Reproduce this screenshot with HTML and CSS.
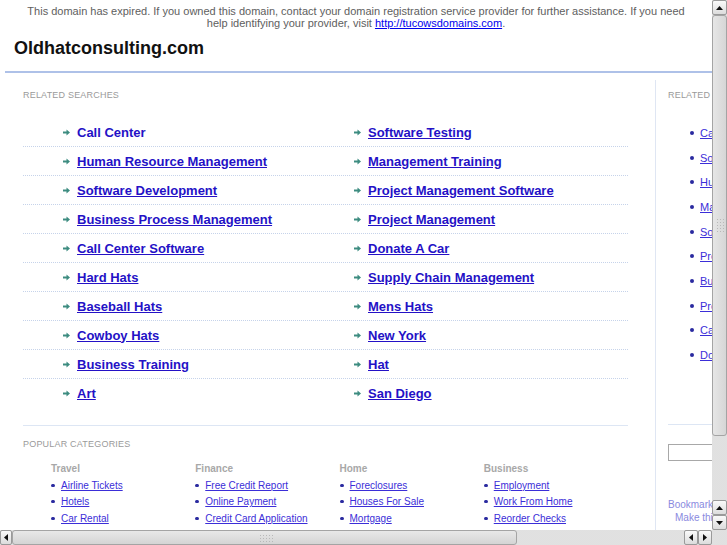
FILE: index.html
```html
<!DOCTYPE html>
<html>
<head>
<meta charset="utf-8">
<title>Oldhatconsulting.com</title>
<link rel="stylesheet" href="styles.css">
</head>
<body>
<div class="window">
  <div class="viewport">
    <div class="page">
      <div class="banner">This domain has expired. If you owned this domain, contact your domain registration service provider for further assistance. If you need help identifying your provider, visit <a href="#">http://tucowsdomains.com</a>.</div>
      <h1 class="title">Oldhatconsulting.com</h1>
      <div class="rule"></div>
      <div class="main">
        <div class="left">
          <div class="label">RELATED SEARCHES</div>
          <div class="rs">
            <div class="rs-row">
              <div class="rs-cell"><svg class="arr" width="7" height="7" viewBox="0 0 7 7"><path d="M0 2.5h3.5V0.5L7 3.5 3.5 6.5V4.5H0z"/></svg><a class="nul" href="#">Call Center</a></div>
              <div class="rs-cell"><svg class="arr" width="7" height="7" viewBox="0 0 7 7"><path d="M0 2.5h3.5V0.5L7 3.5 3.5 6.5V4.5H0z"/></svg><a href="#">Software Testing</a></div>
            </div>
            <div class="rs-row">
              <div class="rs-cell"><svg class="arr" width="7" height="7" viewBox="0 0 7 7"><path d="M0 2.5h3.5V0.5L7 3.5 3.5 6.5V4.5H0z"/></svg><a href="#">Human Resource Management</a></div>
              <div class="rs-cell"><svg class="arr" width="7" height="7" viewBox="0 0 7 7"><path d="M0 2.5h3.5V0.5L7 3.5 3.5 6.5V4.5H0z"/></svg><a href="#">Management Training</a></div>
            </div>
            <div class="rs-row">
              <div class="rs-cell"><svg class="arr" width="7" height="7" viewBox="0 0 7 7"><path d="M0 2.5h3.5V0.5L7 3.5 3.5 6.5V4.5H0z"/></svg><a href="#">Software Development</a></div>
              <div class="rs-cell"><svg class="arr" width="7" height="7" viewBox="0 0 7 7"><path d="M0 2.5h3.5V0.5L7 3.5 3.5 6.5V4.5H0z"/></svg><a href="#">Project Management Software</a></div>
            </div>
            <div class="rs-row">
              <div class="rs-cell"><svg class="arr" width="7" height="7" viewBox="0 0 7 7"><path d="M0 2.5h3.5V0.5L7 3.5 3.5 6.5V4.5H0z"/></svg><a href="#">Business Process Management</a></div>
              <div class="rs-cell"><svg class="arr" width="7" height="7" viewBox="0 0 7 7"><path d="M0 2.5h3.5V0.5L7 3.5 3.5 6.5V4.5H0z"/></svg><a href="#">Project Management</a></div>
            </div>
            <div class="rs-row">
              <div class="rs-cell"><svg class="arr" width="7" height="7" viewBox="0 0 7 7"><path d="M0 2.5h3.5V0.5L7 3.5 3.5 6.5V4.5H0z"/></svg><a href="#">Call Center Software</a></div>
              <div class="rs-cell"><svg class="arr" width="7" height="7" viewBox="0 0 7 7"><path d="M0 2.5h3.5V0.5L7 3.5 3.5 6.5V4.5H0z"/></svg><a href="#">Donate A Car</a></div>
            </div>
            <div class="rs-row">
              <div class="rs-cell"><svg class="arr" width="7" height="7" viewBox="0 0 7 7"><path d="M0 2.5h3.5V0.5L7 3.5 3.5 6.5V4.5H0z"/></svg><a href="#">Hard Hats</a></div>
              <div class="rs-cell"><svg class="arr" width="7" height="7" viewBox="0 0 7 7"><path d="M0 2.5h3.5V0.5L7 3.5 3.5 6.5V4.5H0z"/></svg><a href="#">Supply Chain Management</a></div>
            </div>
            <div class="rs-row">
              <div class="rs-cell"><svg class="arr" width="7" height="7" viewBox="0 0 7 7"><path d="M0 2.5h3.5V0.5L7 3.5 3.5 6.5V4.5H0z"/></svg><a href="#">Baseball Hats</a></div>
              <div class="rs-cell"><svg class="arr" width="7" height="7" viewBox="0 0 7 7"><path d="M0 2.5h3.5V0.5L7 3.5 3.5 6.5V4.5H0z"/></svg><a href="#">Mens Hats</a></div>
            </div>
            <div class="rs-row">
              <div class="rs-cell"><svg class="arr" width="7" height="7" viewBox="0 0 7 7"><path d="M0 2.5h3.5V0.5L7 3.5 3.5 6.5V4.5H0z"/></svg><a href="#">Cowboy Hats</a></div>
              <div class="rs-cell"><svg class="arr" width="7" height="7" viewBox="0 0 7 7"><path d="M0 2.5h3.5V0.5L7 3.5 3.5 6.5V4.5H0z"/></svg><a href="#">New York</a></div>
            </div>
            <div class="rs-row">
              <div class="rs-cell"><svg class="arr" width="7" height="7" viewBox="0 0 7 7"><path d="M0 2.5h3.5V0.5L7 3.5 3.5 6.5V4.5H0z"/></svg><a href="#">Business Training</a></div>
              <div class="rs-cell"><svg class="arr" width="7" height="7" viewBox="0 0 7 7"><path d="M0 2.5h3.5V0.5L7 3.5 3.5 6.5V4.5H0z"/></svg><a href="#">Hat</a></div>
            </div>
            <div class="rs-row">
              <div class="rs-cell"><svg class="arr" width="7" height="7" viewBox="0 0 7 7"><path d="M0 2.5h3.5V0.5L7 3.5 3.5 6.5V4.5H0z"/></svg><a href="#">Art</a></div>
              <div class="rs-cell"><svg class="arr" width="7" height="7" viewBox="0 0 7 7"><path d="M0 2.5h3.5V0.5L7 3.5 3.5 6.5V4.5H0z"/></svg><a href="#">San Diego</a></div>
            </div>
          </div>
          <div class="popular">
            <div class="label">POPULAR CATEGORIES</div>
            <div class="cats">
              <div class="cat">
                <div class="cat-h">Travel</div>
                <ul class="cat-list">
                  <li><a href="#">Airline Tickets</a></li>
                  <li><a href="#">Hotels</a></li>
                  <li><a href="#">Car Rental</a></li>
                </ul>
              </div>
              <div class="cat">
                <div class="cat-h">Finance</div>
                <ul class="cat-list">
                  <li><a href="#">Free Credit Report</a></li>
                  <li><a href="#">Online Payment</a></li>
                  <li><a href="#">Credit Card Application</a></li>
                </ul>
              </div>
              <div class="cat">
                <div class="cat-h">Home</div>
                <ul class="cat-list">
                  <li><a href="#">Foreclosures</a></li>
                  <li><a href="#">Houses For Sale</a></li>
                  <li><a href="#">Mortgage</a></li>
                </ul>
              </div>
              <div class="cat">
                <div class="cat-h">Business</div>
                <ul class="cat-list">
                  <li><a href="#">Employment</a></li>
                  <li><a href="#">Work From Home</a></li>
                  <li><a href="#">Reorder Checks</a></li>
                </ul>
              </div>
            </div>
          </div>
        </div>
        <div class="right">
          <div class="label">RELATED SEARCHES</div>
          <ul class="side-list">
            <li><a href="#">Call Center</a></li>
            <li><a href="#">Software Testing</a></li>
            <li><a href="#">Human Resource Management</a></li>
            <li><a href="#">Management Training</a></li>
            <li><a href="#">Software Development</a></li>
            <li><a href="#">Project Management Software</a></li>
            <li><a href="#">Business Process Management</a></li>
            <li><a href="#">Project Management</a></li>
            <li><a href="#">Call Center Software</a></li>
            <li><a href="#">Donate A Car</a></li>
          </ul>
          <div class="side-sep"></div>
          <div class="search"></div>
          <div class="bm">Bookmark this page</div>
          <div class="bm bm2">Make this your Homepage</div>
        </div>
      </div>
    </div>
  </div>
  <div class="vscroll">
    <div class="sbtn"><svg width="7" height="4" viewBox="0 0 7 4"><path d="M3.5 0L7 4H0z"/></svg></div>
    <div class="vthumb"><span class="grip vgrip"></span></div>
    <div class="track"></div>
    <div class="sbtn"><svg width="7" height="4" viewBox="0 0 7 4"><path d="M3.5 0L7 4H0z"/></svg></div>
    <div class="sbtn"><svg width="7" height="4" viewBox="0 0 7 4"><path d="M0 0H7L3.5 4z"/></svg></div>
  </div>
  <div class="hscroll">
    <div class="sbtn hbtn first"><svg width="4" height="7" viewBox="0 0 4 7"><path d="M0 3.5L4 0V7z"/></svg></div>
    <div class="hthumb"><span class="grip hgrip"></span></div>
    <div class="track"></div>
    <div class="sbtn hbtn"><svg width="4" height="7" viewBox="0 0 4 7"><path d="M0 3.5L4 0V7z"/></svg></div>
    <div class="sbtn hbtn"><svg width="4" height="7" viewBox="0 0 4 7"><path d="M4 3.5L0 0V7z"/></svg></div>
  </div>
  <div class="corner"></div>
</div>
</body>
</html>
```
FILE: styles.css
```css
html, body {
  margin: 0;
  padding: 0;
  background: #fff;
}
body {
  width: 727px;
  height: 545px;
  overflow: hidden;
  font-family: "Liberation Sans", Arial, sans-serif;
}
.window {
  display: grid;
  grid-template-columns: 712px 15px;
  grid-template-rows: 530px 15px;
  width: 727px;
  height: 545px;
  overflow: hidden;
}
.viewport {
  overflow: hidden;
  min-width: 0;
  min-height: 0;
}
.page {
  width: 960px;
}
.banner {
  width: 712px;
  box-sizing: border-box;
  padding: 5px 20px 0;
  font-size: 11px;
  line-height: 12px;
  color: #5e5e5e;
  text-align: center;
}
.banner a {
  color: #0000ee;
  text-decoration: underline;
}
.title {
  margin: 8px 0 0 14px;
  font-size: 18px;
  line-height: 22px;
  font-weight: bold;
  color: #111;
}
.rule {
  margin: 12px 0 0 5px;
  height: 2px;
  background: #aec1e8;
}
.main {
  display: flex;
  margin: 7px 0 0 5px;
}
.left {
  width: 650px;
  box-sizing: border-box;
  padding: 10px 27px 0 18px;
}
.label {
  font-size: 9px;
  line-height: 10px;
  color: #9a9a9a;
  letter-spacing: 0.2px;
}
.rs {
  margin-top: 18px;
}
.rs-row {
  display: flex;
  height: 28px;
  border-bottom: 1px dotted #c6d3ea;
}
.rs-row:last-child {
  border-bottom: none;
}
.rs-cell {
  width: 291px;
  box-sizing: border-box;
  padding-left: 40px;
  display: flex;
  align-items: center;
  gap: 7px;
}
.arr {
  fill: #3d8c80;
  flex: none;
}
.rs-cell a {
  font-size: 13px;
  font-weight: bold;
  color: #2411c6;
  text-decoration: underline;
}
.rs-cell a.nul {
  text-decoration: none;
}
.popular {
  margin-top: 18px;
  border-top: 1px solid #dde6f4;
  padding-top: 13px;
}
.cats {
  display: flex;
  margin-top: 13px;
  padding-left: 28px;
}
.cat {
  width: 145px;
}
.cat-h {
  font-size: 10px;
  line-height: 14px;
  font-weight: bold;
  color: #a8a8a8;
}
.cat-list {
  list-style: none;
  margin: 1px 0 0;
  padding: 0;
}
.cat-list li {
  display: flex;
  align-items: center;
  height: 16.5px;
  font-size: 10px;
}
.cat-list li::before {
  content: "";
  width: 4px;
  height: 3px;
  border-radius: 2px;
  background: #2a2aa0;
  margin-right: 6px;
}
.cat-list a {
  color: #3b2ed8;
  text-decoration: underline;
}
.right {
  flex: none;
  width: 290px;
  border-left: 1px solid #dfe6f3;
  padding: 10px 0 0 12px;
  height: 460px;
}
.side-list {
  list-style: none;
  margin: 20.6px 0 0;
  padding: 0 0 0 22px;
}
.side-list li {
  display: flex;
  align-items: center;
  height: 24.7px;
  font-size: 11px;
}
.side-list li::before {
  content: "";
  width: 4px;
  height: 4px;
  border-radius: 2px;
  background: #2a2aa0;
  margin-right: 6px;
}
.side-list a {
  color: #3b2ed8;
  text-decoration: underline;
}
.side-sep {
  margin-top: 57px;
  width: 200px;
  height: 1px;
  background: #dde6f4;
}
.search {
  margin-top: 19px;
  width: 150px;
  height: 17px;
  box-sizing: border-box;
  border: 1px solid #a8a8a8;
}
.bm {
  margin-top: 37px;
  font-size: 10px;
  line-height: 13px;
  color: #8a8ae0;
}
.bm2 {
  margin-top: 0;
  padding-left: 7px;
}

/* scrollbars */
.vscroll, .hscroll, .corner {
  background-color: #ececec;
  background-image: radial-gradient(#d2d2d2 0.6px, transparent 0.8px);
  background-size: 2px 2px;
  overflow: hidden;
  min-width: 0;
  min-height: 0;
}
.vscroll {
  display: flex;
  flex-direction: column;
}
.hscroll {
  display: flex;
}
.sbtn {
  flex: none;
  box-sizing: border-box;
  width: 15px;
  height: 15px;
  border: 1px solid #9a9a9a;
  border-radius: 2px;
  background: linear-gradient(#fafafa, #dcdcdc);
  display: flex;
  align-items: center;
  justify-content: center;
}
.sbtn svg {
  fill: #111;
  display: block;
}
.hbtn {
  width: 14px;
}
.hbtn.first {
  width: 12px;
}
.vthumb {
  flex: none;
  height: 421px;
  box-sizing: border-box;
  border: 1px solid #a4a4a4;
  border-radius: 3px;
  background: linear-gradient(90deg, #e6e6e6, #d6d6d6);
  position: relative;
}
.hthumb {
  flex: none;
  width: 505px;
  box-sizing: border-box;
  border: 1px solid #a4a4a4;
  border-radius: 3px;
  background: linear-gradient(#e8e8e8, #d4d4d4);
  position: relative;
}
.track {
  flex: 1;
}
.grip {
  position: absolute;
  background-image: radial-gradient(#b8b8b8 0.7px, transparent 0.9px);
  background-size: 3px 3px;
}
.vgrip {
  left: 3px;
  top: 202px;
  width: 9px;
  height: 15px;
}
.hgrip {
  left: 246px;
  top: 3px;
  width: 16px;
  height: 8px;
}
```
